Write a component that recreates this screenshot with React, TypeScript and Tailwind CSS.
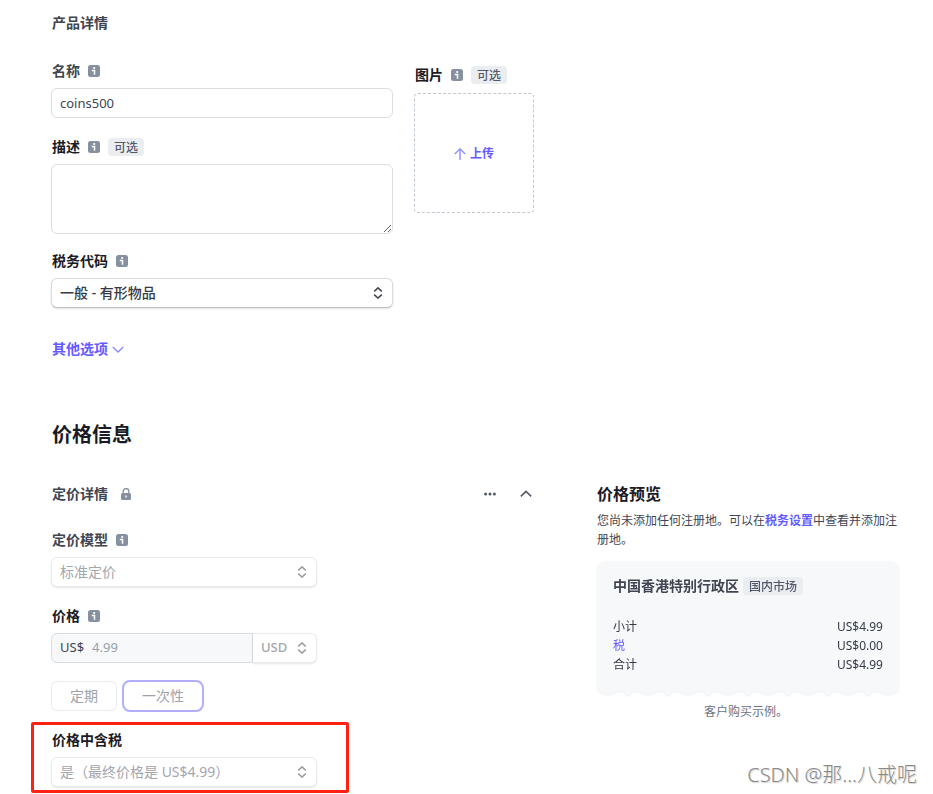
import type { ReactNode, SelectHTMLAttributes } from "react";

function InfoIcon() {
  return (
    <svg width="12" height="12" viewBox="0 0 12 12" className="shrink-0" aria-hidden="true">
      <rect width="12" height="12" rx="2.5" fill="#87909f" />
      <circle cx="6.2" cy="3" r="1.1" fill="#fff" />
      <path d="M3.8 5.6h2.7v4.2" fill="none" stroke="#fff" strokeWidth="1.5" />
    </svg>
  );
}

function LockIcon() {
  return (
    <svg width="12" height="12" viewBox="0 0 12 12" className="shrink-0" aria-hidden="true">
      <path d="M3.2 5.5V3.4a2.8 2.8 0 0 1 5.6 0v2.1" fill="none" stroke="#87909f" strokeWidth="1.3" />
      <rect x="1" y="5" width="10" height="7" rx="1.5" fill="#87909f" />
      <path d="M6 7.4v2" stroke="#fff" strokeWidth="1.4" />
    </svg>
  );
}

function UpDownIcon({ className }: { className: string }) {
  return (
    <svg
      width="10"
      height="12"
      viewBox="0 0 10 12"
      fill="none"
      stroke="currentColor"
      strokeWidth="1.5"
      className={className}
      aria-hidden="true"
    >
      <path d="M1.2 4.4 5 0.9l3.8 3.5M1.2 7.6 5 11.1l3.8-3.5" />
    </svg>
  );
}

function Badge({ children }: { children: ReactNode }) {
  return (
    <span className="inline-block h-[18px] rounded bg-[#ebeef1] px-1.5 text-xs leading-5 font-medium text-[#545969]">
      {children}
    </span>
  );
}

function Label({
  htmlFor,
  dark,
  info,
  optional,
  children,
}: {
  htmlFor: string;
  dark?: boolean;
  info?: boolean;
  optional?: boolean;
  children: ReactNode;
}) {
  return (
    <div className="mb-1.5 flex h-[22px] items-center gap-2 pl-px">
      <label
        htmlFor={htmlFor}
        className={
          dark
            ? "text-sm leading-[22px] font-bold text-[#1a1b25]"
            : "text-sm leading-[22px] font-bold text-[#414552]"
        }
      >
        {children}
      </label>
      {info && <InfoIcon />}
      {optional && <Badge>可选</Badge>}
    </div>
  );
}

function Select({ children, ...props }: SelectHTMLAttributes<HTMLSelectElement>) {
  return (
    <div className="relative">
      <select
        {...props}
        className={
          props.disabled
            ? "block h-[30px] w-full appearance-none rounded-md border border-[#ebebed] bg-white pr-6 pl-2 text-sm text-[#a3a6ad] opacity-100 shadow-[0_1px_2px_rgba(0,0,0,0.10)]"
            : "block h-[30px] w-full appearance-none rounded-md border border-[#d9dadd] border-b-[#bfc0c4] bg-white pr-6 pl-2 text-sm font-medium text-[#353a44] shadow-[0_1px_2px_rgba(0,0,0,0.12)]"
        }
      >
        {children}
      </select>
      <UpDownIcon
        className={
          props.disabled
            ? "pointer-events-none absolute top-[9px] right-[10px] text-[#9a9da5]"
            : "pointer-events-none absolute top-[9px] right-[10px] text-[#414552]"
        }
      />
    </div>
  );
}

function ProductDetails() {
  return (
    <section className="pt-3">
      <h3 className="pl-px text-sm leading-[22px] font-bold text-[#414552]">产品详情</h3>
      <div className="mt-[26px] flex gap-[21px]">
        <div className="w-[342px]">
          <Label htmlFor="name" info>
            名称
          </Label>
          <input
            id="name"
            type="text"
            defaultValue="coins500"
            className="block h-[30px] w-full rounded-md border border-[#dcdde0] px-2 text-[13px] text-[#414552]"
          />
          <div className="mt-[18px]">
            <Label htmlFor="description" dark info optional>
              描述
            </Label>
            <textarea
              id="description"
              className="block h-[70px] w-full resize rounded-md border border-[#dcdde0] px-2 py-1 text-sm text-[#414552]"
            />
          </div>
          <div className="mt-4">
            <Label htmlFor="tax-code" dark info>
              税务代码
            </Label>
            <Select id="tax-code">
              <option>一般 - 有形物品</option>
            </Select>
          </div>
          <button
            type="button"
            className="mt-[30px] flex items-center gap-1 pl-px text-sm leading-[22px] font-bold text-[#635bff]"
          >
            其他选项
            <svg width="12" height="12" viewBox="0 0 12 12" fill="none" stroke="#8d87ff" strokeWidth="1.3" aria-hidden="true">
              <path d="m0.8 4 5.2 5 5.2-5" />
            </svg>
          </button>
        </div>
        <div className="pt-1">
          <Label htmlFor="upload" dark info optional>
            图片
          </Label>
          <button
            id="upload"
            type="button"
            className="mt-[7px] flex size-[120px] items-center justify-center gap-1 rounded border border-dashed border-[#c0c8d2] pt-0.5 text-xs font-bold text-[#635bff]"
          >
            <svg width="12" height="12" viewBox="0 0 12 12" fill="none" stroke="#9a94ff" strokeWidth="1.5" aria-hidden="true">
              <path d="M6 12V1M0.8 6 6 0.9 11.2 6" />
            </svg>
            上传
          </button>
        </div>
      </div>
    </section>
  );
}

function PricingForm() {
  return (
    <div className="min-w-0 flex-1">
      <div className="flex h-[22px] items-center pr-px pl-px">
        <h3 className="text-sm leading-[22px] font-bold text-[#414552]">定价详情</h3>
        <span className="ml-3">
          <LockIcon />
        </span>
        <button type="button" aria-label="更多" className="ml-auto">
          <svg width="12" height="12" viewBox="0 0 12 12" fill="#545969" aria-hidden="true">
            <circle cx="1.6" cy="6" r="1.5" />
            <circle cx="6" cy="6" r="1.5" />
            <circle cx="10.4" cy="6" r="1.5" />
          </svg>
        </button>
        <button type="button" aria-label="收起" className="ml-6">
          <svg width="12" height="12" viewBox="0 0 12 12" fill="none" stroke="#545969" strokeWidth="1.5" aria-hidden="true">
            <path d="m0.8 8.4 5.2-5 5.2 5" />
          </svg>
        </button>
      </div>

      <div className="mt-6 w-[266px]">
        <Label htmlFor="model" info>
          定价模型
        </Label>
        <Select id="model" disabled>
          <option>标准定价</option>
        </Select>
      </div>

      <div className="mt-[18px] w-[266px]">
        <Label htmlFor="price" dark info>
          价格
        </Label>
        <div className="flex">
          <div className="flex h-[30px] min-w-0 flex-1 items-center gap-2 rounded-l-md border border-[#d8dee4] bg-[#f6f8fa] pl-2 text-[13px]">
            <span className="text-[#414552]">US$</span>
            <input
              id="price"
              type="text"
              defaultValue="4.99"
              disabled
              className="w-full min-w-0 bg-transparent text-[#98a0ac]"
            />
          </div>
          <div className="relative w-16">
            <select
              aria-label="货币"
              disabled
              className="block h-[30px] w-full appearance-none rounded-r-md border border-l-0 border-[#ebebed] bg-white pl-2 text-[13px] font-medium text-[#a3a6ad] opacity-100 shadow-[0_1px_2px_rgba(0,0,0,0.10)]"
            >
              <option>USD</option>
            </select>
            <UpDownIcon className="pointer-events-none absolute top-[9px] right-[10px] text-[#9a9da5]" />
          </div>
        </div>
      </div>

      <div className="mt-[17px] flex items-center gap-[5px]">
        <button
          type="button"
          disabled
          className="h-[30px] w-[66px] rounded-md border border-[#ebebed] text-sm text-[#a0a2a9]"
        >
          定期
        </button>
        <button
          type="button"
          disabled
          className="h-8 w-[82px] rounded-lg border-2 border-[#b1adff] text-sm text-[#a0a2a9]"
        >
          一次性
        </button>
      </div>

      <div className="mt-2.5 -ml-5 w-[318px] rounded-xs border-3 border-[#ff2213] pt-1 pr-[29px] pb-[3px] pl-[17px]">
        <Label htmlFor="tax-included" dark>
          价格中含税
        </Label>
        <Select id="tax-included" disabled>
          <option>是（最终价格是 US$4.99）</option>
        </Select>
      </div>
    </div>
  );
}

function PricePreview() {
  return (
    <aside className="w-[302px] shrink-0">
      <h3 className="text-base leading-[22px] font-bold text-[#1a1b25]">价格预览</h3>
      <p className="mt-1.5 text-xs leading-[19px] text-[#414552]">
        您尚未添加任何注册地。可以在
        <a href="#tax" className="font-bold text-[#635bff]">
          税务设置
        </a>
        中查看并添加注册地。
      </p>
      <div className="mt-3 drop-shadow-[0_1px_1px_rgba(0,0,0,0.07)]">
        <div className="rounded-t-lg bg-[#f6f8fa] px-4 pt-[14px] pb-4">
          <div className="flex h-[22px] items-center gap-1">
            <h4 className="text-sm leading-[22px] font-bold text-[#414552]">中国香港特别行政区</h4>
            <Badge>国内市场</Badge>
          </div>
          <dl className="mt-5 grid grid-cols-[1fr_auto] text-xs leading-[19px] text-[#353a44]">
            <dt>小计</dt>
            <dd>US$4.99</dd>
            <dt className="text-[#635bff]">税</dt>
            <dd>US$0.00</dd>
            <dt>合计</dt>
            <dd>US$4.99</dd>
          </dl>
        </div>
        <svg
          viewBox="0 0 302 5"
          preserveAspectRatio="none"
          className="block h-[5px] w-full"
          fill="#f6f8fa"
          aria-hidden="true"
        >
          <path d="M0 0H302Q301 1 300 1.200Q296 2 293.500 3.500T288.500 3.500T281.500 1T273.500 3.500T268.500 3.500T261.500 1T253.500 3.500T248.500 3.500T241.500 1T233.500 3.500T228.500 3.500T221.500 1T213.500 3.500T208.500 3.500T201.500 1T193.500 3.500T188.500 3.500T181.500 1T173.500 3.500T168.500 3.500T161.500 1T153.500 3.500T148.500 3.500T141.500 1T133.500 3.500T128.500 3.500T121.500 1T113.500 3.500T108.500 3.500T101.500 1T93.500 3.500T88.500 3.500T81.500 1T73.500 3.500T68.500 3.500T61.500 1T53.500 3.500T48.500 3.500T41.500 1T33.500 3.500T28.500 3.500T21.500 1T13.500 3.500T8.500 3.500T0 0Z" />
        </svg>
      </div>
      <p className="mt-[7px] pr-1 text-center text-xs leading-[19px] text-[#687385]">客户购买示例。</p>
    </aside>
  );
}

export default function App() {
  return (
    <main className="relative bg-white pr-[34px] pl-[51px] font-['Noto_Sans','Noto_Sans_CJK_SC',sans-serif]">
      <ProductDetails />
      <section className="mt-[61px]">
        <h2 className="pl-px text-xl leading-7 font-bold text-[#1a1b25]">价格信息</h2>
        <div className="mt-[34px] flex gap-16">
          <PricingForm />
          <PricePreview />
        </div>
      </section>
      <div className="pointer-events-none absolute right-4 bottom-1.5 text-xl leading-6 font-light text-[#8a8a8a] [text-shadow:1px_1px_1px_#d0d0d0]">
        CSDN @那...八戒呢
      </div>
    </main>
  );
}
